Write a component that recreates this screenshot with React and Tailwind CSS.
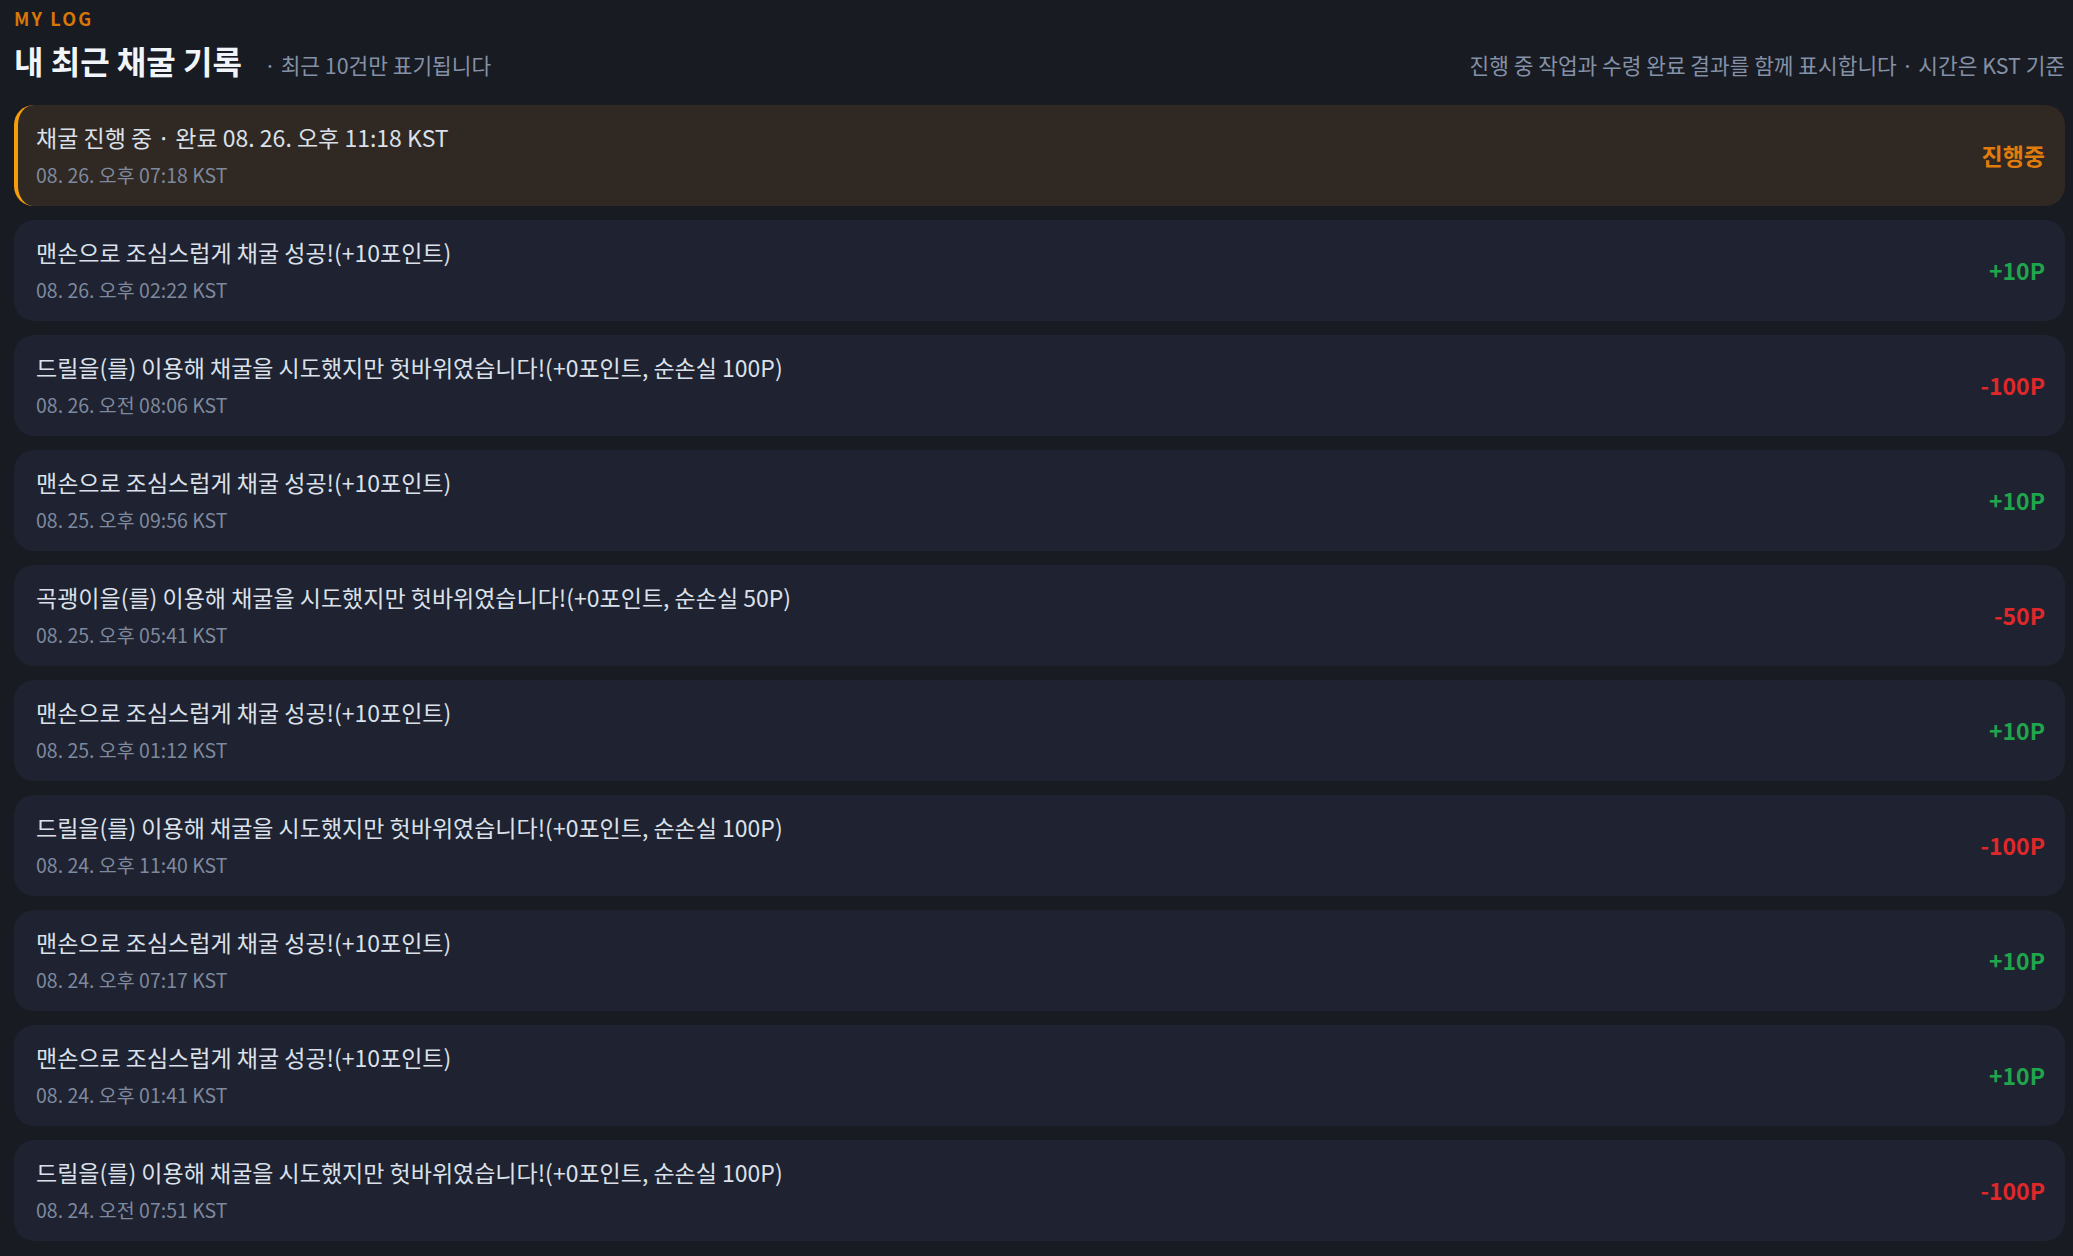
import React from 'react';

const LOGS = [
  {
    id: 'pending',
    title: '채굴 진행 중 · 완료 08. 26. 오후 11:18 KST',
    time: '08. 26. 오후 07:18 KST',
    kind: 'pending',
    value: '진행중',
  },
  { id: 1, title: '맨손으로 조심스럽게 채굴 성공!(+10포인트)', time: '08. 26. 오후 02:22 KST', kind: 'gain', value: '+10P' },
  {
    id: 2,
    title: '드릴을(를) 이용해 채굴을 시도했지만 헛바위였습니다!(+0포인트, 순손실 100P)',
    time: '08. 26. 오전 08:06 KST',
    kind: 'loss',
    value: '-100P',
  },
  { id: 3, title: '맨손으로 조심스럽게 채굴 성공!(+10포인트)', time: '08. 25. 오후 09:56 KST', kind: 'gain', value: '+10P' },
  {
    id: 4,
    title: '곡괭이을(를) 이용해 채굴을 시도했지만 헛바위였습니다!(+0포인트, 순손실 50P)',
    time: '08. 25. 오후 05:41 KST',
    kind: 'loss',
    value: '-50P',
  },
  { id: 5, title: '맨손으로 조심스럽게 채굴 성공!(+10포인트)', time: '08. 25. 오후 01:12 KST', kind: 'gain', value: '+10P' },
  {
    id: 6,
    title: '드릴을(를) 이용해 채굴을 시도했지만 헛바위였습니다!(+0포인트, 순손실 100P)',
    time: '08. 24. 오후 11:40 KST',
    kind: 'loss',
    value: '-100P',
  },
  { id: 7, title: '맨손으로 조심스럽게 채굴 성공!(+10포인트)', time: '08. 24. 오후 07:17 KST', kind: 'gain', value: '+10P' },
  { id: 8, title: '맨손으로 조심스럽게 채굴 성공!(+10포인트)', time: '08. 24. 오후 01:41 KST', kind: 'gain', value: '+10P' },
  {
    id: 9,
    title: '드릴을(를) 이용해 채굴을 시도했지만 헛바위였습니다!(+0포인트, 순손실 100P)',
    time: '08. 24. 오전 07:51 KST',
    kind: 'loss',
    value: '-100P',
  },
];

const VALUE_COLOR = {
  pending: 'text-[#e07c0c]',
  gain: 'text-[#1fa64c]',
  loss: 'text-[#e0282a]',
};

const LogRow = ({ log }) => {
  const pending = log.kind === 'pending';
  return (
    <li
      className={[
        'flex items-center justify-between rounded-[20px] border-l-4 py-[17px] pl-[18px] pr-[20px]',
        pending ? 'border-[#f59e0b] bg-[#302822]' : 'border-transparent bg-[#1f2230]',
      ].join(' ')}
    >
      <div className="min-w-0">
        <div className="text-[23px] leading-[31px] text-[#dbe1ea]">{log.title}</div>
        <div className="mt-[8px] text-[19.5px] leading-[28px] text-[#7e899d]">{log.time}</div>
      </div>
      <div className={['shrink-0 text-[23px] font-bold', VALUE_COLOR[log.kind]].join(' ')}>{log.value}</div>
    </li>
  );
};

export default function App() {
  return (
    <div
      className="min-h-screen bg-[#181b22] pb-[14px] pl-[14px] pr-[8px] pt-[6px]"
      style={{ fontFamily: '"Noto Sans CJK KR", "Noto Sans", sans-serif' }}
    >
      <div className="text-[18px] font-bold leading-[24px] tracking-[0.12em] text-[#d97706]">MY LOG</div>

      <div className="mt-[9px] flex items-end justify-between">
        <div className="flex items-baseline gap-[22px]">
          <h2 className="text-[32px] font-bold leading-[42px] text-[#f1f5f9]">내 최근 채굴 기록</h2>
          <span className="text-[21.4px] text-[#8491a6]">· 최근 10건만 표기됩니다</span>
        </div>
        <div className="text-[21.4px] leading-[32px] text-[#8491a6]">
          진행 중 작업과 수령 완료 결과를 함께 표시합니다 · 시간은 KST 기준
        </div>
      </div>

      <ul className="mt-[24px] flex flex-col gap-[14px]">
        {LOGS.map((log) => (
          <LogRow key={log.id} log={log} />
        ))}
      </ul>
    </div>
  );
}
